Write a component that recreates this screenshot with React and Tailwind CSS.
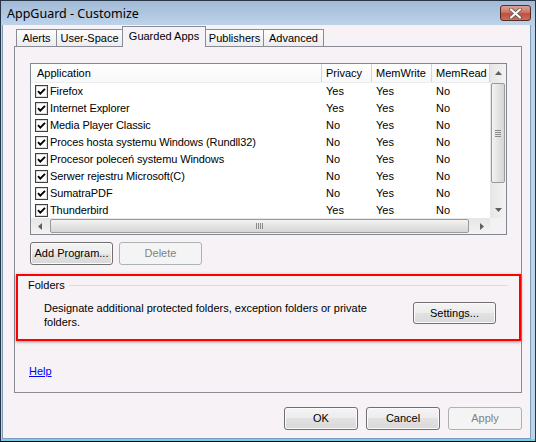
import React from 'react';

const apps = [
  ['Firefox', 'Yes', 'Yes', 'No'],
  ['Internet Explorer', 'Yes', 'Yes', 'No'],
  ['Media Player Classic', 'No', 'Yes', 'No'],
  ['Proces hosta systemu Windows (Rundll32)', 'No', 'Yes', 'No'],
  ['Procesor poleceń systemu Windows', 'No', 'Yes', 'No'],
  ['Serwer rejestru Microsoft(C)', 'No', 'Yes', 'No'],
  ['SumatraPDF', 'No', 'Yes', 'No'],
  ['Thunderbird', 'Yes', 'Yes', 'No'],
];

const btn =
  'h-[23px] flex items-center justify-center border border-[#707070] rounded-[3px] bg-[linear-gradient(#f4f4f4,#ececec_50%,#e2e2e2_50%,#d9d9d9)] shadow-[inset_0_0_0_1px_#fbfbfb]';
const btnOff =
  'h-[23px] flex items-center justify-center border border-[#adb2b5] rounded-[3px] bg-[#f4f4f4] text-[#838383]';

function Check() {
  return (
    <svg width="13" height="13" viewBox="0 0 13 13" className="shrink-0">
      <rect x="0.5" y="0.5" width="12" height="12" fill="#f4f4f4" stroke="#3f3f3f" />
      <rect x="1.5" y="1.5" width="10" height="10" fill="#ffffff" stroke="#c8c8c8" strokeWidth="0.6" />
      <path d="M3 6.2 L5.3 8.6 L10 3.8" fill="none" stroke="#000" strokeWidth="1.9" />
    </svg>
  );
}

function Tab({ label, className, active, first }) {
  if (active) {
    return (
      <div
        className={`relative z-10 -ml-px mb-[-1px] h-[21px] flex items-center justify-center pb-[2px] border border-b-0 border-[#898c95] bg-[#f6f2f6] ${className}`}
      >
        {label}
      </div>
    );
  }
  return (
    <div
      className={`h-[17px] flex items-center justify-center border-t border-r border-[#898c95] bg-[linear-gradient(#fdfdfd,#eeecee)] ${first ? 'border-l' : ''} ${className}`}
    >
      {label}
    </div>
  );
}

export default function App() {
  return (
    <div className="w-[536px] h-[442px] flex flex-col overflow-hidden border border-[#263646] border-b-black bg-[#bcd3ea] font-['Liberation_Sans',Arial,sans-serif] text-[11px] text-black">
      {/* title bar */}
      <div className="h-[24px] shrink-0 flex items-start bg-[linear-gradient(#a2bad5,#bdd3ea)]">
        <div className="pl-[6px] mt-[5px] text-[12.5px] font-['Noto_Sans',sans-serif] leading-[16px]">AppGuard - Customize</div>
        <div className="ml-auto mr-[4px] mt-[4px] w-[31px] h-[16px] rounded-[3px] border border-[#5a2a24] bg-[linear-gradient(#dfa295,#cc7565_45%,#bd5040_55%,#c96d5a)] flex items-center justify-center">
          <svg width="13" height="11" viewBox="0 0 13 11">
            <path d="M2 1.5 L11 9.5 M11 1.5 L2 9.5" stroke="#5b4a48" strokeWidth="3.6" strokeLinecap="round" />
            <path d="M2 1.5 L11 9.5 M11 1.5 L2 9.5" stroke="#ffffff" strokeWidth="2.2" strokeLinecap="round" />
          </svg>
        </div>
      </div>

      {/* frame + client */}
      <div className="flex-1 flex pl-[1px] pr-[4px] border-b-2 border-b-[#6fd0f0]">
        <div className="flex-1 flex flex-col border-l border-r border-b border-[#7f9db9] bg-[#f6f2f6]">
          {/* tabs */}
          <div className="h-[21px] flex items-end pl-[13px]">
            <Tab label="Alerts" className="w-[41px]" first />
            <Tab label="User-Space" className="w-[66px]" />
            <Tab label="Guarded Apps" className="w-[84px]" active />
            <Tab label="Publishers" className="w-[58px]" />
            <Tab label="Advanced" className="w-[60px]" />
          </div>

          {/* tab panel */}
          <div className="ml-[11px] w-[508px] h-[347px] border border-[#898c95] flex flex-col">
            {/* list view */}
            <div className="ml-[15px] mt-[16px] w-[477px] h-[172px] border border-[#828790] bg-white flex flex-col">
              <div className="flex h-[154px]">
                <div className="w-[459px] flex flex-col">
                  <div className="h-[19px] flex bg-[linear-gradient(#ffffff,#f7f8fa)] border-b border-[#ededed]">
                    <div className="w-[291px] pl-[6px] flex items-center border-r border-[#d5d5d5]">Application</div>
                    <div className="w-[50px] pl-[4px] flex items-center border-r border-[#d5d5d5]">Privacy</div>
                    <div className="w-[60px] pl-[4px] flex items-center border-r border-[#d5d5d5]">MemWrite</div>
                    <div className="w-[58px] pl-[4px] flex items-center border-r border-[#d5d5d5] whitespace-nowrap overflow-hidden">MemRead</div>
                  </div>
                  <div className="h-[135px] overflow-hidden">
                    {apps.map(([name, p, w, r]) => (
                      <div key={name} className="h-[17px] flex">
                        <div className="w-[291px] pl-[4px] flex items-center">
                          <Check />
                          <span className="ml-[2px] whitespace-nowrap tracking-[-0.1px]">{name}</span>
                        </div>
                        <div className="w-[50px] pl-[4px] flex items-center">{p}</div>
                        <div className="w-[60px] pl-[4px] flex items-center">{w}</div>
                        <div className="w-[58px] pl-[4px] flex items-center">{r}</div>
                      </div>
                    ))}
                  </div>
                </div>
                {/* vertical scrollbar */}
                <div className="w-[16px] flex flex-col bg-[linear-gradient(90deg,#e6e6e6,#f3f3f3)]">
                  <div className="h-[17px] flex items-center justify-center">
                    <svg width="7" height="4" viewBox="0 0 7 4"><path d="M0 4 L3.5 0 L7 4 Z" fill="#606060" /></svg>
                  </div>
                  <div className="mt-[2px] mx-[1px] h-[100px] rounded-[2px] border border-[#9a9a9a] bg-[linear-gradient(90deg,#f3f3f3,#e4e4e4_50%,#d6d6d6)] flex items-center justify-center">
                    <div className="w-[6px] flex flex-col gap-[1px]">
                      <div className="h-px bg-[#8a8a8a]" />
                      <div className="h-px bg-[#8a8a8a]" />
                      <div className="h-px bg-[#8a8a8a]" />
                      <div className="h-px bg-[#8a8a8a]" />
                    </div>
                  </div>
                  <div className="mt-auto h-[17px] flex items-center justify-center">
                    <svg width="7" height="4" viewBox="0 0 7 4"><path d="M0 0 L3.5 4 L7 0 Z" fill="#606060" /></svg>
                  </div>
                </div>
              </div>
              {/* horizontal scrollbar */}
              <div className="flex h-[16px]">
                <div className="w-[459px] flex bg-[linear-gradient(#e6e6e6,#f3f3f3)]">
                  <div className="w-[17px] flex items-center justify-center">
                    <svg width="4" height="7" viewBox="0 0 4 7"><path d="M4 0 L0 3.5 L4 7 Z" fill="#606060" /></svg>
                  </div>
                  <div className="ml-[2px] my-[1px] w-[419px] rounded-[2px] border border-[#9a9a9a] bg-[linear-gradient(#f3f3f3,#e4e4e4_50%,#d6d6d6)] flex items-center justify-center">
                    <div className="h-[6px] flex gap-[1px]">
                      <div className="w-px bg-[#8a8a8a]" />
                      <div className="w-px bg-[#8a8a8a]" />
                      <div className="w-px bg-[#8a8a8a]" />
                      <div className="w-px bg-[#8a8a8a]" />
                    </div>
                  </div>
                  <div className="ml-auto w-[17px] flex items-center justify-center">
                    <svg width="4" height="7" viewBox="0 0 4 7"><path d="M0 0 L4 3.5 L0 7 Z" fill="#606060" /></svg>
                  </div>
                </div>
                <div className="w-[16px] bg-[#f3f1f3]" />
              </div>
            </div>

            {/* list buttons */}
            <div className="ml-[15px] mt-[7px] flex gap-[6px]">
              <div className={`${btn} w-[83px]`}>Add Program...</div>
              <div className={`${btnOff} w-[83px]`}>Delete</div>
            </div>

            {/* folders (highlighted) */}
            <div className="ml-[1px] mt-[9px] w-[505px] h-[67px] border-2 border-[#ff0000] shadow-[0_1px_3px_rgba(0,0,0,0.4)] flex flex-col">
              <div className="mt-[3px] h-[13px] flex items-center pl-[10px] pr-[11px]">
                <span>Folders</span>
                <div className="ml-[4px] flex-1 h-px bg-[#d5dfe5]" />
              </div>
              <div className="mt-[9px] flex items-start">
                <div className="ml-[26px] w-[330px] leading-[14px]">
                  Designate additional protected folders, exception folders or private folders.
                </div>
                <div className={`${btn} ml-auto mr-[23px] mt-[1px] w-[83px] !h-[22px]`}>Settings...</div>
              </div>
            </div>

            <div className="ml-[14px] mt-[24px] leading-[13px] text-[#0000ff] underline w-fit">Help</div>
          </div>

          {/* dialog buttons */}
          <div className="mt-[14px] flex justify-end gap-[8px] pr-[8px]">
            <div className={`${btn} w-[74px]`}>OK</div>
            <div className={`${btn} w-[74px]`}>Cancel</div>
            <div className={`${btnOff} w-[74px]`}>Apply</div>
          </div>
        </div>
      </div>
    </div>
  );
}
